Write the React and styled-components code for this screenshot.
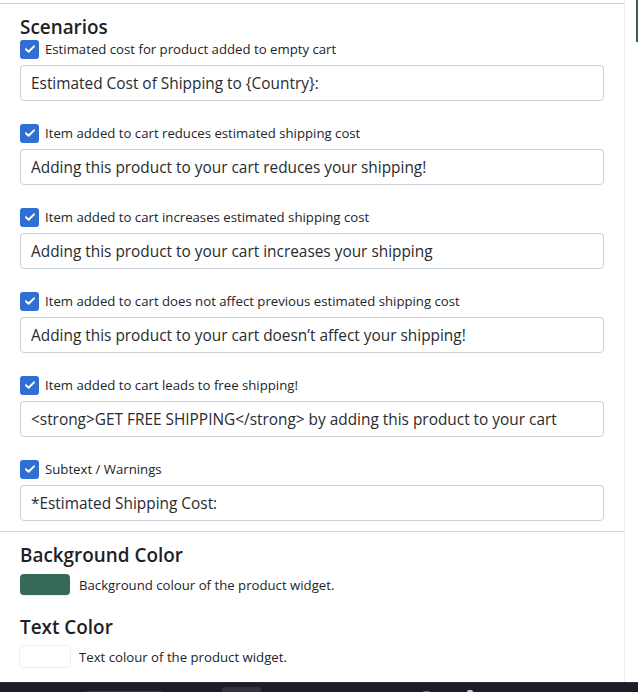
import React from "react";
import styled, { createGlobalStyle } from "styled-components";

const GlobalStyle = createGlobalStyle`
  html, body {
    margin: 0;
    padding: 0;
    background: #ffffff;
  }
  body {
    font-family: "Open Sans", "Noto Sans", sans-serif;
    color: #212529;
    overflow: hidden;
  }
`;

const Page = styled.div`
  display: flex;
  flex-direction: column;
  height: 692px;
  width: 638px;
`;

const Body = styled.div`
  flex: 1;
  display: flex;
  min-height: 0;
`;

const Panel = styled.div`
  width: 624px;
  border-right: 1px solid #ececec;
  display: flex;
  flex-direction: column;
`;

const TopRule = styled.div`
  margin-top: 3px;
  height: 1px;
  background: #cfcfcf;
`;

const Section = styled.section`
  padding: ${(p) => p.pad || "12px 20px 10px 20px"};
  border-bottom: ${(p) => (p.divider ? "1px solid #d6d6d6" : "none")};
`;

const Heading = styled.h2`
  margin: 0;
  font-size: 18.9px;
  font-weight: 600;
  line-height: 24px;
  color: #1e2125;
`;

const Scenario = styled.div`
  display: flex;
  flex-direction: column;
  gap: 6px;
  margin-bottom: ${(p) => (p.last ? "0" : "22px")};
`;

const CheckRow = styled.label`
  display: flex;
  align-items: center;
  gap: 6px;
  height: 20px;
  font-size: 13.2px;
  color: #212529;
`;

const Box = styled.span`
  width: 19px;
  height: 19px;
  border-radius: 3px;
  background: #2f6ed2;
  display: flex;
  align-items: center;
  justify-content: center;
  flex-shrink: 0;
`;

const TextInput = styled.input`
  box-sizing: border-box;
  width: 584px;
  height: 36px;
  margin: 0;
  padding: 0 10px;
  border: 1px solid #c9d0d9;
  border-radius: 4px;
  font-family: inherit;
  font-size: 15.4px;
  color: #292b2f;
  background: #fff;
  outline: none;
`;

const ColorRow = styled.div`
  display: flex;
  align-items: center;
  gap: 9px;
  margin-top: 7px;
  font-size: 13.2px;
`;

const Swatch = styled.span`
  width: 50px;
  height: 21px;
  border-radius: 4px;
  background: ${(p) => p.color};
  box-shadow: 0 0 0 1px ${(p) => (p.color === "#ffffff" ? "#efefef" : "transparent")},
    0 1px 1px rgba(0, 0, 0, 0.08);
`;

const Side = styled.div`
  flex: 1;
  padding-left: 11px;
`;

const WidgetEdge = styled.div`
  width: 3px;
  height: 42px;
  background: #33604f;
`;

const Taskbar = styled.div`
  height: 9px;
  background: #1d1d27;
  border-top: 1px solid #2a2a34;
  display: flex;
  align-items: flex-end;
`;

const TaskItem = styled.span`
  margin-left: ${(p) => p.left}px;
  width: ${(p) => p.w}px;
  height: ${(p) => p.h}px;
  background: ${(p) => p.color};
  border-radius: 3px 3px 0 0;
`;

const Check = () => (
  <svg width="12" height="12" viewBox="0 0 12 12">
    <path d="M2 6.3l2.6 2.5L10 3.4" fill="none" stroke="#fff" strokeWidth="2" strokeLinecap="round" strokeLinejoin="round" />
  </svg>
);

const scenarios = [
  ["Estimated cost for product added to empty cart", "Estimated Cost of Shipping to {Country}:"],
  ["Item added to cart reduces estimated shipping cost", "Adding this product to your cart reduces your shipping!"],
  ["Item added to cart increases estimated shipping cost", "Adding this product to your cart increases your shipping"],
  ["Item added to cart does not affect previous estimated shipping cost", "Adding this product to your cart doesn\u2019t affect your shipping!"],
  ["Item added to cart leads to free shipping!", "<strong>GET FREE SHIPPING</strong> by adding this product to your cart"],
  ["Subtext / Warnings", "*Estimated Shipping Cost:"],
];

export default function App() {
  return (
    <Page>
      <GlobalStyle />
      <Body>
        <Panel>
          <TopRule />
          <Section divider pad="11px 20px 10px 20px">
            <Heading>Scenarios</Heading>
            {scenarios.map(([label, value], i) => (
              <Scenario key={i} last={i === scenarios.length - 1}>
                <CheckRow>
                  <Box>
                    <Check />
                  </Box>
                  {label}
                </CheckRow>
                <TextInput defaultValue={value} />
              </Scenario>
            ))}
          </Section>
          <Section pad="11px 20px 10px 20px">
            <Heading>Background Color</Heading>
            <ColorRow>
              <Swatch color="#356a56" />
              Background colour of the product widget.
            </ColorRow>
          </Section>
          <Section pad="10px 20px 0 20px">
            <Heading>Text Color</Heading>
            <ColorRow>
              <Swatch color="#ffffff" />
              Text colour of the product widget.
            </ColorRow>
          </Section>
        </Panel>
        <Side>
          <WidgetEdge />
        </Side>
      </Body>
      <Taskbar>
        <TaskItem left={85} w={77} h={1} color="#3a3a44" />
        <TaskItem left={60} w={39} h={5} color="#33333d" />
        <TaskItem left={162} w={7} h={1} color="#d04444" />
        <TaskItem left={37} w={6} h={2} color="#c8c8cc" />
      </Taskbar>
    </Page>
  );
}
